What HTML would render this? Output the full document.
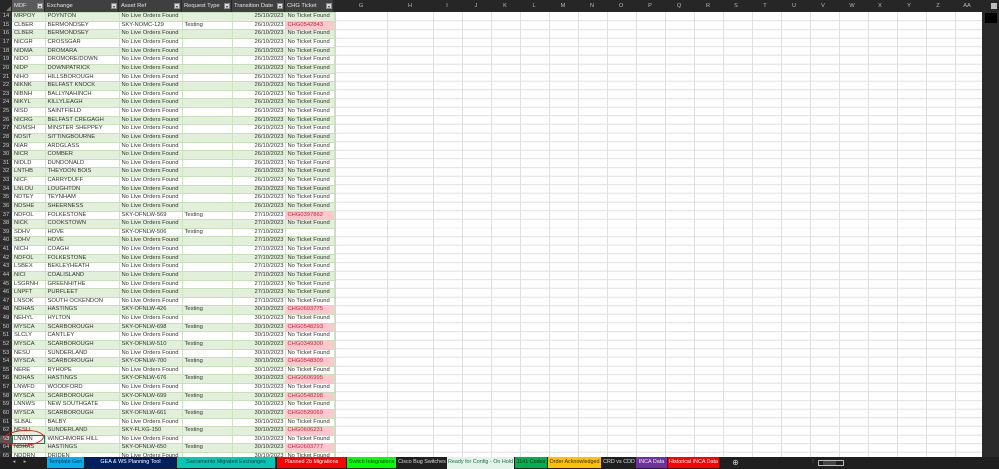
<!DOCTYPE html>
<html><head><meta charset="utf-8"><style>
*{margin:0;padding:0;box-sizing:border-box}
body{width:999px;height:469px;overflow:hidden;background:#fff;position:relative;font-family:"Liberation Sans",sans-serif}
#hdr{position:absolute;left:0;top:0;width:999px;height:12px;background:#262626;z-index:5}
.cl{position:absolute;top:2px;font-size:5.6px;color:#bbb;width:20px;text-align:center;margin-left:-10px;line-height:8px}
.th{position:absolute;top:0;height:12px;background:#3f3f3f;color:#e6e6e6;font-size:5.8px;line-height:12px;padding-left:2px;border-right:1px solid #262626;white-space:nowrap;overflow:hidden}
.fb{position:absolute;right:1px;top:3px;width:6px;height:6px;background:#d9d9d9;border:1px solid #888}
.fb:after{content:"";position:absolute;left:1px;top:1.5px;border-left:1.5px solid transparent;border-right:1.5px solid transparent;border-top:2px solid #333}
#grid{position:absolute;left:334px;top:12px;width:648px;height:445px;background:repeating-linear-gradient(to bottom,transparent 0,transparent 7.63px,#e1e1e1 7.63px,#e1e1e1 8.63px);background-position:0 0.7px}
#vg{position:absolute;left:99px;top:0;width:549px;height:445px;background:repeating-linear-gradient(to right,#e1e1e1 0,#e1e1e1 1px,transparent 1px,transparent 29px)}
table{position:absolute;left:0;top:4.07px;border-collapse:collapse;table-layout:fixed;width:334px}
tr{height:8.63px}
td,th{font-size:5.8px;line-height:7.6px;height:8.63px;white-space:nowrap;overflow:hidden;padding:0 0 0 2px;color:#333;font-weight:normal;text-align:left}
th{background:#2d2d2d;color:#c8c8c8;text-align:center;padding:0;border-bottom:1px solid #3a3a3a}
tr.g td{background:#e2efda}
td{border-right:1px solid #d0e4c4;border-bottom:1px solid #c9dfbb}
tr.w td{background:#fff}
td.r{text-align:right;padding-right:1px}
td.c{background:#ffc7ce!important;color:#d0203a}
#sb{position:absolute;left:982px;top:12px;width:17px;height:445px;background:#2b2b2b}
#tabs{position:absolute;left:0;top:457px;width:999px;height:12px;background:#1f1f1f}
.tb{position:absolute;top:0;height:11px;font-size:5.4px;line-height:11px;text-align:center;white-space:nowrap;overflow:hidden}
</style></head><body>
<div id="grid"><div style="position:absolute;left:1px;top:0;width:1px;height:445px;background:#c9dfbb"></div><div style="position:absolute;left:53px;top:0;width:1px;height:445px;background:#e1e1e1"></div><div id="vg"></div></div>
<table>
<colgroup><col style="width:12px"><col style="width:33px"><col style="width:74px"><col style="width:63px"><col style="width:50px"><col style="width:53px"><col style="width:49px"></colgroup>
<tr class=w><th>13</th><td>NIHO</td><td>HILLSBOROUGH</td><td>No Live Orders Found</td><td></td><td class=r>25/10/2023</td><td>No Ticket Found</td></tr>
<tr class=g><th>14</th><td>MRPOY</td><td>POYNTON</td><td>No Live Orders Found</td><td></td><td class=r>25/10/2023</td><td>No Ticket Found</td></tr>
<tr class=w><th>15</th><td>CLBER</td><td>BERMONDSEY</td><td>SKY-NOMC-129</td><td>Testing</td><td class=r>26/10/2023</td><td class=c>CHG0542843</td></tr>
<tr class=g><th>16</th><td>CLBER</td><td>BERMONDSEY</td><td>No Live Orders Found</td><td></td><td class=r>26/10/2023</td><td>No Ticket Found</td></tr>
<tr class=w><th>17</th><td>NICGR</td><td>CROSSGAR</td><td>No Live Orders Found</td><td></td><td class=r>26/10/2023</td><td>No Ticket Found</td></tr>
<tr class=g><th>18</th><td>NIDMA</td><td>DROMARA</td><td>No Live Orders Found</td><td></td><td class=r>26/10/2023</td><td>No Ticket Found</td></tr>
<tr class=w><th>19</th><td>NIDO</td><td>DROMORE/DOWN</td><td>No Live Orders Found</td><td></td><td class=r>26/10/2023</td><td>No Ticket Found</td></tr>
<tr class=g><th>20</th><td>NIDP</td><td>DOWNPATRICK</td><td>No Live Orders Found</td><td></td><td class=r>26/10/2023</td><td>No Ticket Found</td></tr>
<tr class=w><th>21</th><td>NIHO</td><td>HILLSBOROUGH</td><td>No Live Orders Found</td><td></td><td class=r>26/10/2023</td><td>No Ticket Found</td></tr>
<tr class=g><th>22</th><td>NIKNK</td><td>BELFAST KNOCK</td><td>No Live Orders Found</td><td></td><td class=r>26/10/2023</td><td>No Ticket Found</td></tr>
<tr class=w><th>23</th><td>NIBNH</td><td>BALLYNAHINCH</td><td>No Live Orders Found</td><td></td><td class=r>26/10/2023</td><td>No Ticket Found</td></tr>
<tr class=g><th>24</th><td>NIKYL</td><td>KILLYLEAGH</td><td>No Live Orders Found</td><td></td><td class=r>26/10/2023</td><td>No Ticket Found</td></tr>
<tr class=w><th>25</th><td>NISD</td><td>SAINTFIELD</td><td>No Live Orders Found</td><td></td><td class=r>26/10/2023</td><td>No Ticket Found</td></tr>
<tr class=g><th>26</th><td>NICRG</td><td>BELFAST CREGAGH</td><td>No Live Orders Found</td><td></td><td class=r>26/10/2023</td><td>No Ticket Found</td></tr>
<tr class=w><th>27</th><td>NDMSH</td><td>MINSTER SHEPPEY</td><td>No Live Orders Found</td><td></td><td class=r>26/10/2023</td><td>No Ticket Found</td></tr>
<tr class=g><th>28</th><td>NDSIT</td><td>SITTINGBOURNE</td><td>No Live Orders Found</td><td></td><td class=r>26/10/2023</td><td>No Ticket Found</td></tr>
<tr class=w><th>29</th><td>NIAR</td><td>ARDGLASS</td><td>No Live Orders Found</td><td></td><td class=r>26/10/2023</td><td>No Ticket Found</td></tr>
<tr class=g><th>30</th><td>NICR</td><td>COMBER</td><td>No Live Orders Found</td><td></td><td class=r>26/10/2023</td><td>No Ticket Found</td></tr>
<tr class=w><th>31</th><td>NIDLD</td><td>DUNDONALD</td><td>No Live Orders Found</td><td></td><td class=r>26/10/2023</td><td>No Ticket Found</td></tr>
<tr class=g><th>32</th><td>LNTHB</td><td>THEYDON BOIS</td><td>No Live Orders Found</td><td></td><td class=r>26/10/2023</td><td>No Ticket Found</td></tr>
<tr class=w><th>33</th><td>NICF</td><td>CARRYDUFF</td><td>No Live Orders Found</td><td></td><td class=r>26/10/2023</td><td>No Ticket Found</td></tr>
<tr class=g><th>34</th><td>LNLOU</td><td>LOUGHTON</td><td>No Live Orders Found</td><td></td><td class=r>26/10/2023</td><td>No Ticket Found</td></tr>
<tr class=w><th>35</th><td>NDTEY</td><td>TEYNHAM</td><td>No Live Orders Found</td><td></td><td class=r>26/10/2023</td><td>No Ticket Found</td></tr>
<tr class=g><th>36</th><td>NDSHE</td><td>SHEERNESS</td><td>No Live Orders Found</td><td></td><td class=r>26/10/2023</td><td>No Ticket Found</td></tr>
<tr class=w><th>37</th><td>NDFOL</td><td>FOLKESTONE</td><td>SKY-OFNLW-569</td><td>Testing</td><td class=r>27/10/2023</td><td class=c>CHG0397862</td></tr>
<tr class=g><th>38</th><td>NICK</td><td>COOKSTOWN</td><td>No Live Orders Found</td><td></td><td class=r>27/10/2023</td><td>No Ticket Found</td></tr>
<tr class=w><th>39</th><td>SDHV</td><td>HOVE</td><td>SKY-OFNLW-506</td><td>Testing</td><td class=r>27/10/2023</td><td></td></tr>
<tr class=g><th>40</th><td>SDHV</td><td>HOVE</td><td>No Live Orders Found</td><td></td><td class=r>27/10/2023</td><td>No Ticket Found</td></tr>
<tr class=w><th>41</th><td>NICH</td><td>COAGH</td><td>No Live Orders Found</td><td></td><td class=r>27/10/2023</td><td>No Ticket Found</td></tr>
<tr class=g><th>42</th><td>NDFOL</td><td>FOLKESTONE</td><td>No Live Orders Found</td><td></td><td class=r>27/10/2023</td><td>No Ticket Found</td></tr>
<tr class=w><th>43</th><td>LSBEX</td><td>BEKLEYHEATH</td><td>No Live Orders Found</td><td></td><td class=r>27/10/2023</td><td>No Ticket Found</td></tr>
<tr class=g><th>44</th><td>NICI</td><td>COALISLAND</td><td>No Live Orders Found</td><td></td><td class=r>27/10/2023</td><td>No Ticket Found</td></tr>
<tr class=w><th>45</th><td>LSGRNH</td><td>GREENHITHE</td><td>No Live Orders Found</td><td></td><td class=r>27/10/2023</td><td>No Ticket Found</td></tr>
<tr class=g><th>46</th><td>LNPFT</td><td>PURFLEET</td><td>No Live Orders Found</td><td></td><td class=r>27/10/2023</td><td>No Ticket Found</td></tr>
<tr class=w><th>47</th><td>LNSOK</td><td>SOUTH OCKENDON</td><td>No Live Orders Found</td><td></td><td class=r>27/10/2023</td><td>No Ticket Found</td></tr>
<tr class=g><th>48</th><td>NDHAS</td><td>HASTINGS</td><td>SKY-OFNLW-426</td><td>Testing</td><td class=r>30/10/2023</td><td class=c>CHG0603775</td></tr>
<tr class=w><th>49</th><td>NEHYL</td><td>HYLTON</td><td>No Live Orders Found</td><td></td><td class=r>30/10/2023</td><td>No Ticket Found</td></tr>
<tr class=g><th>50</th><td>MYSCA</td><td>SCARBOROUGH</td><td>SKY-OFNLW-698</td><td>Testing</td><td class=r>30/10/2023</td><td class=c>CHG0548293</td></tr>
<tr class=w><th>51</th><td>SLCLY</td><td>CANTLEY</td><td>No Live Orders Found</td><td></td><td class=r>30/10/2023</td><td>No Ticket Found</td></tr>
<tr class=g><th>52</th><td>MYSCA</td><td>SCARBOROUGH</td><td>SKY-OFNLW-510</td><td>Testing</td><td class=r>30/10/2023</td><td class=c>CHG0349300</td></tr>
<tr class=w><th>53</th><td>NESU</td><td>SUNDERLAND</td><td>No Live Orders Found</td><td></td><td class=r>30/10/2023</td><td>No Ticket Found</td></tr>
<tr class=g><th>54</th><td>MYSCA</td><td>SCARBOROUGH</td><td>SKY-OFNLW-700</td><td>Testing</td><td class=r>30/10/2023</td><td class=c>CHG0548309</td></tr>
<tr class=w><th>55</th><td>NERE</td><td>RYHOPE</td><td>No Live Orders Found</td><td></td><td class=r>30/10/2023</td><td>No Ticket Found</td></tr>
<tr class=g><th>56</th><td>NDHAS</td><td>HASTINGS</td><td>SKY-OFNLW-676</td><td>Testing</td><td class=r>30/10/2023</td><td class=c>CHG0606995</td></tr>
<tr class=w><th>57</th><td>LNWFD</td><td>WOODFORD</td><td>No Live Orders Found</td><td></td><td class=r>30/10/2023</td><td>No Ticket Found</td></tr>
<tr class=g><th>58</th><td>MYSCA</td><td>SCARBOROUGH</td><td>SKY-OFNLW-699</td><td>Testing</td><td class=r>30/10/2023</td><td class=c>CHG0548298</td></tr>
<tr class=w><th>59</th><td>LNNWS</td><td>NEW SOUTHGATE</td><td>No Live Orders Found</td><td></td><td class=r>30/10/2023</td><td>No Ticket Found</td></tr>
<tr class=g><th>60</th><td>MYSCA</td><td>SCARBOROUGH</td><td>SKY-OFNLW-661</td><td>Testing</td><td class=r>30/10/2023</td><td class=c>CHG0529069</td></tr>
<tr class=w><th>61</th><td>SLBAL</td><td>BALBY</td><td>No Live Orders Found</td><td></td><td class=r>30/10/2023</td><td>No Ticket Found</td></tr>
<tr class=g><th>62</th><td>NESU</td><td>SUNDERLAND</td><td>SKY-FLXG-150</td><td>Testing</td><td class=r>30/10/2023</td><td class=c>CHG0606231</td></tr>
<tr class=w><th style="background:#555;color:#eee">63</th><td style="outline:1px solid #217346;outline-offset:-1px">LNWIN</td><td>WINCHMORE HILL</td><td>No Live Orders Found</td><td></td><td class=r>30/10/2023</td><td>No Ticket Found</td></tr>
<tr class=g><th>64</th><td>NDHAS</td><td>HASTINGS</td><td>SKY-OFNLW-650</td><td>Testing</td><td class=r>30/10/2023</td><td class=c>CHG0603777</td></tr>
<tr class=w><th>65</th><td>NDDRN</td><td>DRIDEN</td><td>No Live Orders Found</td><td></td><td class=r>30/10/2023</td><td>No Ticket Found</td></tr>
</table>
<div style="position:absolute;left:3px;top:430px;width:41px;height:16px;border:1px solid #e02020;border-radius:50%;transform:rotate(-4deg);z-index:3"></div>
<div id="hdr">
<div class="th" style="left:0;width:12px;background:#262626;border:none"><span style="position:absolute;right:1px;bottom:1px;border-left:5px solid transparent;border-bottom:5px solid #777"></span></div>
<div class="th" style="left:12px;width:33px;background:#5a5a5a">MDF<span class="fb"></span></div>
<div class="th" style="left:45px;width:74px">Exchange<span class="fb"></span></div>
<div class="th" style="left:119px;width:63px">Asset Ref<span class="fb"></span></div>
<div class="th" style="left:182px;width:50px">Request Type<span class="fb"></span></div>
<div class="th" style="left:232px;width:53px">Transition Date<span class="fb"></span></div>
<div class="th" style="left:285px;width:49px">CHG Ticket<span class="fb"></span></div>
<div class="cl" style="left:361px">G</div><div class="cl" style="left:410px">H</div><div class="cl" style="left:447px">I</div><div class="cl" style="left:476px">J</div><div class="cl" style="left:505px">K</div><div class="cl" style="left:534px">L</div><div class="cl" style="left:563px">M</div><div class="cl" style="left:592px">N</div><div class="cl" style="left:621px">O</div><div class="cl" style="left:650px">P</div><div class="cl" style="left:679px">Q</div><div class="cl" style="left:708px">R</div><div class="cl" style="left:736px">S</div><div class="cl" style="left:765px">T</div><div class="cl" style="left:794px">U</div><div class="cl" style="left:823px">V</div><div class="cl" style="left:852px">W</div><div class="cl" style="left:880px">X</div><div class="cl" style="left:909px">Y</div><div class="cl" style="left:938px">Z</div><div class="cl" style="left:967px">AA</div>
<div style="position:absolute;left:991px;top:3px;width:6px;height:6px;background:#bbb"></div>
</div>
<div id="sb"><div style="position:absolute;left:3px;top:1px;width:12px;height:10px;background:#000"></div></div>
<div id="tabs">
<div class="tb" style="left:10px;width:8px;color:#aaa">◂</div><div class="tb" style="left:21px;width:8px;color:#aaa">▸</div>
<div class="tb" style="left:47px;width:37px;background:#00b0f0;color:#1f3050">Template Gen</div>
<div class="tb" style="left:86px;width:89px;background:#002060;color:#fff">GEA &amp; WS Planning Tool</div>
<div class="tb" style="left:177px;width:98px;background:#00c8b4;color:#1a3a3a">Sacramento Migrated Exchanges</div>
<div class="tb" style="left:277px;width:69px;background:#ff0000;color:#fff">Planned 2b Migrations</div>
<div class="tb" style="left:347px;width:49px;background:#00ff00;color:#154015">Switch Integrations</div>
<div class="tb" style="left:397px;width:50px;color:#ddd">Cisco Bug Switches</div>
<div class="tb" style="left:447px;width:67px;background:#e3f3ea;color:#1e7145;height:12px">Ready for Config - On Hold</div>
<div class="tb" style="left:515px;width:32px;background:#00b050;color:#0c2a14">1141 Codes</div>
<div class="tb" style="left:548px;width:53px;background:#ffc000;color:#3a2a00">Order Acknowledged</div>
<div class="tb" style="left:602px;width:34px;color:#ddd">CRD vs CDD</div>
<div class="tb" style="left:636px;width:31px;background:#7030a0;color:#eee">INCA Data</div>
<div class="tb" style="left:668px;width:51px;background:#ff0000;color:#fff">Historical INCA Data</div>
<div class="tb" style="left:731px;width:9px;color:#ccc;font-size:8px">⊕</div>
<div class="tb" style="left:810px;width:6px;color:#ccc">⋮</div>
<div style="position:absolute;left:818px;top:3px;width:26px;height:6px;border:1px solid #bbb;background:#1f1f1f"><div style="position:absolute;left:4px;top:0;width:13px;height:4px;background:#444"></div></div>
</div>
</body></html>
